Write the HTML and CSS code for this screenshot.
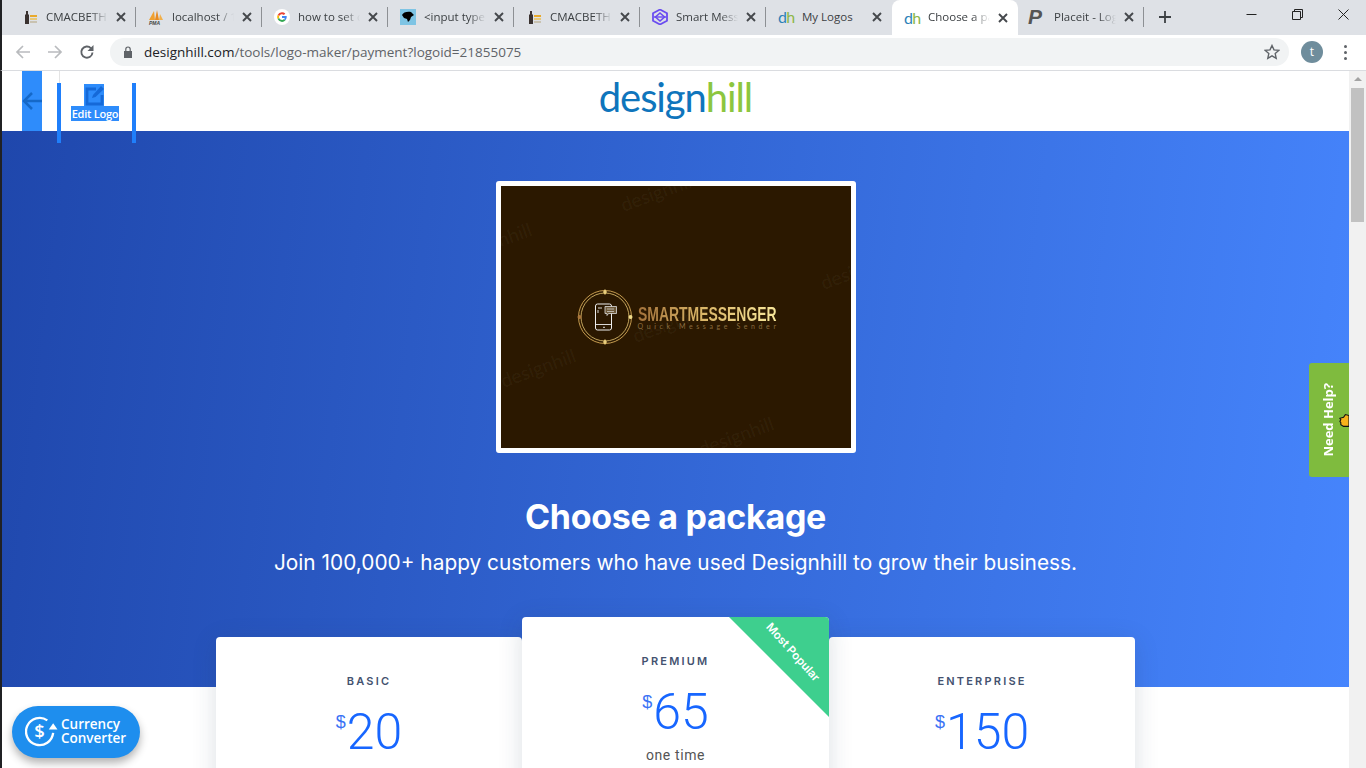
FILE: index.html
```html
<!DOCTYPE html>
<html lang="en">
<head>
<meta charset="utf-8">
<title>Choose a package</title>
<link rel="stylesheet" href="styles.css">
</head>
<body>
<svg class="defs" width="0" height="0"><defs><path id="x" d="M1 1l8 8M9 1l-8 8" stroke="#45484c" stroke-width="1.900" fill="none"/></defs></svg>
<div class="window">
  <div class="tabstrip">
    <div class="tab">
      <svg class="fav" viewBox="0 0 16 16"><path d="M3 15V6l1-1V2h2v3l1 1v9z" fill="#3a3230"/><path d="M8 6h7v2H8z" fill="#e8a92c"/><path d="M8 9h7v2H8z" fill="#e8c878"/><path d="M8 12h7v2H8z" fill="#c9c2b0"/></svg>
      <span class="tab-title">CMACBETH</span><svg class="tab-x" viewBox="0 0 10 10"><use href="#x"/></svg>
    </div>
    <div class="tab">
      <svg class="fav" viewBox="0 0 16 16"><path d="M1 11 6 2l1 9z" fill="#f0a030"/><path d="M7 11 9 1l2 10z" fill="#e88a20"/><path d="M11 11l1-6 3 6z" fill="#f2b04a"/><text x="1" y="15.500" class="fav-pma">PMA</text></svg>
      <span class="tab-title">localhost / 1</span><svg class="tab-x" viewBox="0 0 10 10"><use href="#x"/></svg>
    </div>
    <div class="tab">
      <svg class="fav" viewBox="0 0 16 16"><circle cx="8" cy="8" r="8" fill="#fff"/><path d="M8 3.200a4.800 4.800 0 0 1 3.300 1.300L9.900 5.900A2.900 2.900 0 0 0 5.200 7.100L3.600 5.900A4.800 4.800 0 0 1 8 3.200z" fill="#ea4335"/><path d="M3.600 5.900 5.200 7.100a2.900 2.900 0 0 0 0 1.800L3.600 10.100a4.800 4.800 0 0 1 0-4.200z" fill="#fbbc05"/><path d="M3.600 10.100 5.200 8.900A2.900 2.900 0 0 0 10 10.100l1.500 1.200A4.800 4.800 0 0 1 3.600 10.100z" fill="#34a853"/><path d="M8 7.100h4.700a4.800 4.800 0 0 1-1.200 4.200L10 10.100a2.300 2.300 0 0 0 .8-1.200H8z" fill="#4285f4"/></svg>
      <span class="tab-title">how to set c</span><svg class="tab-x" viewBox="0 0 10 10"><use href="#x"/></svg>
    </div>
    <div class="tab">
      <svg class="fav" viewBox="0 0 16 16"><rect width="16" height="16" fill="#7ec4e4"/><path d="M2 6c1-3 6-4 9-3l3 3-3 2-1 3-2 2-1-3-3-1z" fill="#000"/></svg>
      <span class="tab-title">&lt;input type=</span><svg class="tab-x" viewBox="0 0 10 10"><use href="#x"/></svg>
    </div>
    <div class="tab">
      <svg class="fav" viewBox="0 0 16 16"><path d="M3 15V6l1-1V2h2v3l1 1v9z" fill="#3a3230"/><path d="M8 6h7v2H8z" fill="#e8a92c"/><path d="M8 9h7v2H8z" fill="#e8c878"/><path d="M8 12h7v2H8z" fill="#c9c2b0"/></svg>
      <span class="tab-title">CMACBETH</span><svg class="tab-x" viewBox="0 0 10 10"><use href="#x"/></svg>
    </div>
    <div class="tab">
      <svg class="fav" viewBox="0 0 16 16"><path d="M8 .5 15 4.300v7.400L8 15.500 1 11.700V4.300z" fill="none" stroke="#6a4cf0" stroke-width="1.800"/><path d="M8 4 12.500 8 8 12 3.500 8z" fill="none" stroke="#6a4cf0" stroke-width="1.600"/><path d="M2 8h12" stroke="#6a4cf0" stroke-width="1.400"/></svg>
      <span class="tab-title">Smart Messenger</span><svg class="tab-x" viewBox="0 0 10 10"><use href="#x"/></svg>
    </div>
    <div class="tab">
      <span class="fav fav-dh"><span class="d">d</span><span class="h">h</span></span>
      <span class="tab-title no-fade">My Logos</span><svg class="tab-x" viewBox="0 0 10 10"><use href="#x"/></svg>
    </div>
    <div class="tab active">
      <span class="fav fav-dh"><span class="d">d</span><span class="h">h</span></span>
      <span class="tab-title">Choose a package</span><svg class="tab-x" viewBox="0 0 10 10"><use href="#x"/></svg>
    </div>
    <div class="tab">
      <span class="fav fav-p">P</span>
      <span class="tab-title">Placeit - Logo</span><svg class="tab-x" viewBox="0 0 10 10"><use href="#x"/></svg>
    </div>
    <svg class="newtab" viewBox="0 0 12 12"><path d="M6 0v12M0 6h12" stroke="#3c4043" stroke-width="1.800"/></svg>
    <div class="winbtns">
      <svg viewBox="0 0 11 11" class="winbtn"><path d="M.5 5.500h10" stroke="#222" fill="none"/></svg>
      <svg viewBox="0 0 11 11" class="winbtn"><path d="M.5 2.500h8v8H.5zM2.500 2.500V.5h8v8h-2" stroke="#222" fill="none"/></svg>
      <svg viewBox="0 0 11 11" class="winbtn"><path d="M.5.500l10 10M10.500.500l-10 10" stroke="#222" fill="none"/></svg>
    </div>
  </div>
  <div class="toolbar">
    <svg class="nav" viewBox="0 0 16 16"><path d="M15 8H2M8 2 2 8l6 6" stroke="#b9bbbe" stroke-width="1.700" fill="none"/></svg>
    <svg class="nav" viewBox="0 0 16 16"><path d="M1 8h13M8 2l6 6-6 6" stroke="#b9bbbe" stroke-width="1.700" fill="none"/></svg>
    <svg class="nav reload" viewBox="0 0 16 16"><path d="M13.500 8.500A5.600 5.600 0 1 1 12 4.300" stroke="#5f6368" stroke-width="1.900" fill="none"/><path d="M14.500 1v6h-6z" fill="#5f6368"/></svg>
    <div class="omnibox">
      <svg class="lock" viewBox="0 0 10 12"><path d="M1 5h8v7H1z" fill="#5f6368"/><path d="M2.800 5V3.200a2.200 2.200 0 0 1 4.400 0V5" stroke="#5f6368" stroke-width="1.200" fill="none"/></svg>
      <span class="url"><span class="host">designhill.com</span>/tools/logo-maker/payment?logoid=21855075</span>
      <svg class="star" viewBox="0 0 16 16"><path d="M8 1.500l2 4.400 4.800.5-3.600 3.200 1 4.700L8 11.900l-4.200 2.400 1-4.700L1.200 6.400 6 5.900z" fill="none" stroke="#5f6368" stroke-width="1.400"/></svg>
    </div>
    <span class="avatar">t</span>
    <span class="kebab"><i></i><i></i><i></i></span>
  </div>
  <div class="viewport">
    <div class="edge"></div>
    <main class="page">
      <header class="site-head">
        <div class="head-left">
          <a class="back"><svg viewBox="0 0 20 20"><path d="M20 10H2M10 2 2 10l8 8" stroke="#1568c8" stroke-width="2.500" fill="none"/></svg></a>
          <a class="edit">
            <span class="edit-icon"><svg viewBox="0 0 20 22"><path d="M12 5H3v15h15v-9" stroke="#1569d8" stroke-width="2.800" fill="none"/><path d="M8 14l1-3L17 2l3 3-8.500 8z" fill="#1569d8"/></svg></span>
            <span class="edit-label">Edit Logo</span>
          </a>
        </div>
        <div class="brand"><span class="b-blue">design</span><span class="b-green">hill</span></div>
        <div></div>
      </header>
      <section class="hero">
        <div class="art-frame">
          <div class="art">
            <span class="wm wm1">designhill</span>
            <span class="wm wm2">designhill</span>
            <span class="wm wm3">designhill</span>
            <span class="wm wm4">designhill</span>
            <span class="wm wm5">designhill</span>
            <span class="wm wm6">designhill</span>
            <svg class="emblem" viewBox="0 0 56 56">
              <circle cx="28" cy="28" r="26.500" fill="none" stroke="#c49a4e" stroke-width="1"/>
              <circle cx="28" cy="28" r="24" fill="none" stroke="#e6c572" stroke-width=".8"/>
              <path d="M28 0l2 3-2 3-2-3zM28 50l2 3-2 3-2-3z" fill="#e9cd7c"/>
              <circle cx="2.500" cy="28" r="2" fill="#a8743a"/><circle cx="53.500" cy="28" r="2" fill="#f1dc8a"/>
              <rect x="18.500" y="15" width="16" height="26" rx="2" fill="#2b1800" stroke="#eee" stroke-width="1"/>
              <path d="M18.500 35.500h16M26 38.300h2M21 19h4M21 21v3" stroke="#eee" stroke-width=".9" fill="none"/>
              <path d="M28 17.500h11.500v7h-8l-1.500 2v-2h-2z" fill="#6e5a3a" stroke="#ddd" stroke-width=".8"/>
              <path d="M30 20h7M30 22.500h7" stroke="#ddd" stroke-width=".7"/>
            </svg>
            <div class="art-words">
              <span class="art-name">SMARTMESSENGER</span>
              <span class="art-sub">Quick Message Sender</span>
            </div>
          </div>
        </div>
        <h1>Choose a package</h1>
        <p class="lead">Join 100,000+ happy customers who have used Designhill to grow their business.</p>
      </section>
      <section class="plans">
        <article class="plan side">
          <h2>BASIC</h2>
          <div class="price"><sup>$</sup>20</div>
        </article>
        <article class="plan featured">
          <div class="ribbon"></div>
          <span class="ribbon-text">Most Popular</span>
          <h2>PREMIUM</h2>
          <div class="price"><sup>$</sup>65</div>
          <div class="term">one time</div>
        </article>
        <article class="plan side">
          <h2>ENTERPRISE</h2>
          <div class="price"><sup>$</sup>150</div>
        </article>
      </section>
      <a class="currency">
        <svg viewBox="0 0 34 32"><path d="M23 4A14 14 0 1 0 29 17" stroke="#fff" stroke-width="2.400" fill="none"/><path d="M29 7l4.500 6.500h-9z" fill="#fff"/><text x="15" y="22" class="dollar">$</text></svg>
        <span>Currency<br>Converter</span>
      </a>
      <a class="help"><span>Need Help?</span>
        <svg class="hand" viewBox="0 0 11 15"><path d="M11 2 7 1 5 4 1 5l1 1.500-1 2L2 10l0 2 3 2h6z" fill="#f7b21b" stroke="#111" stroke-width="1.200"/></svg>
      </a>
    </main>
    <aside class="scrollbar">
      <span class="sb-up"></span>
      <span class="sb-thumb"></span>
    </aside>
  </div>
</div>
</body>
</html>
```

FILE: styles.css
```css
* { box-sizing: border-box; }
html, body { margin: 0; height: 100%; overflow: hidden; }
body { font-family: "Open Sans", "Liberation Sans", sans-serif; background: #fff; }
.defs { position: absolute; }
.window { width: 1366px; height: 768px; display: flex; flex-direction: column; overflow: hidden; }

/* tab strip */
.tabstrip { height: 35px; flex: none; background: #dee1e6; display: flex; align-items: stretch; padding-left: 10px; border-left: 2px solid #202124; position: relative; }
.tabstrip .tab:first-child { width: 124px; padding-left: 10px; }
.tab { width: 126px; height: 34px; display: flex; align-items: center; padding-left: 12px; position: relative; font-size: 11.500px; color: #3c4043; flex: none; }
.tab::after { content: ""; position: absolute; right: 0; top: 7px; height: 20px; width: 1px; background: #8d9094; }
.tab.active { background: #fff; border-radius: 8px 8px 0 0; height: 35px; }
.tab.active::after, .tab:nth-child(7)::after { display: none; }
.fav { width: 16px; height: 16px; flex: none; display: block; }
.fav-pma { font: bold 5px "Liberation Sans", sans-serif; fill: #444; font-style: italic; }
.fav-dh { font: 400 16px/15px "Lato", sans-serif; letter-spacing: -.8px; display: flex; }
.fav-dh .d { color: #2d82b8; }
.fav-dh .h { color: #8cb648; }
.fav-p { font: italic 900 21px/16px "Liberation Sans", sans-serif; color: #555; margin-left: -2px; margin-right: 2px; }
.tab-title { margin: -1px 0 0 8px; width: 62px; overflow: hidden; white-space: nowrap; -webkit-mask-image: linear-gradient(90deg, #000 72%, transparent 100%); mask-image: linear-gradient(90deg, #000 72%, transparent 100%); flex: none; line-height: 18px; }
.tab-title.no-fade { -webkit-mask-image: none; mask-image: none; }
.tab-x { width: 10px; height: 10px; margin-left: 8px; flex: none; }
.newtab { width: 12px; height: 12px; margin: 11px 0 0 15px; flex: none; }
.winbtns { margin-left: auto; display: flex; height: 28px; align-items: center; padding-right: 17px; gap: 35px; }
.winbtn { width: 11px; height: 11px; }

/* toolbar */
.toolbar { height: 36px; flex: none; background: #fff; border-bottom: 1px solid #dadce0; border-left: 2px solid #202124; display: flex; align-items: center; padding: 0 0 1px 13px; }
.nav { width: 16px; height: 16px; flex: none; margin-right: 16px; }
.nav.reload { margin-right: 15px; }
.omnibox { width: 1179px; height: 28px; background: #f1f3f4; border-radius: 14px; display: flex; align-items: center; padding: 0 9px 0 13px; }
.lock { width: 10px; height: 12px; flex: none; }
.url { margin-left: 11px; font-size: 13.500px; color: #5f6368; white-space: nowrap; }
.host { color: #202124; }
.star { width: 16px; height: 16px; margin-left: auto; }
.avatar { width: 22px; height: 22px; border-radius: 50%; background: #6f8d9c; color: #fff; font-size: 12px; line-height: 22px; text-align: center; margin-left: 12px; flex: none; }
.kebab { display: flex; flex-direction: column; gap: 3px; margin-left: 21px; }
.kebab i { width: 3px; height: 3px; border-radius: 50%; background: #5f6368; display: block; }

/* viewport */
.viewport { flex: 1; display: flex; min-height: 0; }
.edge { width: 2px; flex: none; background: #202124; }
.page { width: 1347px; flex: none; position: relative; background: #fff; }
.scrollbar { width: 17px; flex: none; background: #f1f1f1; display: flex; flex-direction: column; align-items: center; }
.sb-up { width: 0; height: 0; border: 4px solid transparent; border-top: 0; border-bottom: 4px solid #a3a3a3; margin-top: 6px; }
.sb-thumb { width: 13px; height: 134px; background: #c1c1c1; margin-top: 7px; }

/* site header */
.site-head { height: 60px; display: grid; grid-template-columns: 1fr auto 1fr; position: relative; z-index: 3; background: #fff; }
.head-left { display: flex; align-items: flex-start; padding-left: 20px; }
.back { width: 20px; height: 60px; background: #2e8cfb; display: flex; align-items: center; flex: none; }
.back svg { width: 20px; height: 20px; }
.edit { margin: 12px 0 0 15px; width: 79px; height: 60px; border-left: 4px solid #1f7ffb; border-right: 4px solid #1f7ffb; display: flex; flex-direction: column; align-items: center; padding: 1px 3px 0 0; position: relative; }
.edit::before { content: ""; position: absolute; left: -2px; top: -12px; width: 1px; height: 12px; background: #e4e4e4; }
.edit-icon { width: 20px; height: 22px; background: #2e8cfb; display: block; flex: none; margin-right: 2px; }
.edit-icon svg { width: 20px; height: 22px; display: block; }
.edit-label { background: #2e8cfb; color: #fff; font-size: 11px; line-height: 15px; font-weight: 600; padding: 0 1px; white-space: nowrap; letter-spacing: -.25px; }
.brand { font: 400 40px/56px "Lato", sans-serif; letter-spacing: -1.100px; height: 60px; margin-top: -2px; }
.b-blue { color: #0f75bc; }
.b-green { color: #8cc63f; }

/* hero */
.hero { height: 556px; background: linear-gradient(97deg, #1f47ac 0%, #4685fd 100%); display: flex; flex-direction: column; align-items: center; padding-top: 50px; color: #fff; }
.art-frame { width: 360px; height: 272px; border: 5px solid #fff; border-radius: 3px; flex: none; background: #2b1800; }
.art { width: 100%; height: 100%; position: relative; overflow: hidden; display: flex; align-items: center; justify-content: center; gap: 5px; padding: 0 0 1px 3px; }
.emblem { width: 56px; height: 56px; flex: none; }
.art-words { display: flex; flex-direction: column; width: 140px; padding-top: 3px; align-items: flex-start; }
.art-name { font: 700 20.500px/17px "Liberation Sans", sans-serif; white-space: nowrap; width: max-content; transform: scaleX(.68); transform-origin: left center; background: linear-gradient(90deg, #a2713a, #d9b466 45%, #f8e79a); -webkit-background-clip: text; background-clip: text; color: transparent; }
.art-sub { font: 400 7px/9px "Lato", sans-serif; letter-spacing: 3.600px; white-space: nowrap; color: #8a6b3e; }
.wm { position: absolute; font: 400 19px/24px "Lato", sans-serif; color: rgba(255,255,255,.055); transform: rotate(-20deg); white-space: nowrap; }
.wm1 { left: 118px; top: -6px; }
.wm2 { left: -46px; top: 44px; }
.wm3 { left: 318px; top: 72px; }
.wm4 { left: -2px; top: 170px; }
.wm5 { left: 196px; top: 238px; }
.wm6 { left: 130px; top: 125px; }
h1 { margin: 42px 0 0; font: 700 34px/44px "Inter", sans-serif; color: #fff; letter-spacing: -.3px; }
.lead { margin: 9px 0 0; font: 400 20.850px/30px "Inter", sans-serif; color: #fff; white-space: nowrap; }

/* plans */
.plans { display: flex; justify-content: center; align-items: flex-start; margin-top: -70px; position: relative; z-index: 2; }
.plan { width: 306px; background: #fff; border-radius: 4px; box-shadow: 0 4px 24px rgba(40,60,90,.16); text-align: center; height: 200px; position: relative; }
.plan.side { margin-top: 20px; padding-top: 37px; }
.plan.featured { width: 307px; padding-top: 37px; z-index: 1; overflow: hidden; }
h2 { margin: 0; font: 600 11px/14px "Inter", sans-serif; letter-spacing: 2.200px; color: #44526f; }
.price { font: 300 50px/54px "Roboto", sans-serif; color: #1766ff; margin-top: 17px; }
.price sup { font: 400 18px/1 "Liberation Sans", sans-serif; vertical-align: 21px; margin-right: 1px; color: #3a72f5; }
.term { font: 400 14px/18px "Roboto", sans-serif; color: #555; letter-spacing: .6px; margin-top: 7px; }
.ribbon { position: absolute; right: 0; top: 0; width: 100px; height: 100px; background: #3ecf8e; clip-path: polygon(0 0, 100% 0, 100% 100%); }
.ribbon-text { position: absolute; left: 231px; top: 28px; width: 80px; text-align: center; font: 600 11.500px/14px "Inter", sans-serif; color: #fff; transform: rotate(48deg); white-space: nowrap; }

/* floating */
.currency { position: absolute; left: 10px; top: 635px; width: 128px; height: 52px; background: #1e8eee; border-radius: 26px; box-shadow: 0 5px 8px rgba(0,0,0,.3); display: flex; align-items: center; padding-left: 13px; gap: 3px; color: #fff; font: 600 13.500px/14px "Open Sans", sans-serif; z-index: 5; }
.currency svg { width: 33px; height: 32px; flex: none; }
.currency span { margin-top: -2px; }
.dollar { font: 600 19px "Open Sans", sans-serif; fill: #fff; text-anchor: middle; }
.help { position: absolute; left: 1307px; top: 292px; width: 40px; height: 114px; background: #7fbb3e; border-radius: 3px 0 0 3px; display: flex; align-items: center; justify-content: center; z-index: 5; overflow: hidden; }
.help span { writing-mode: vertical-rl; transform: rotate(180deg); color: #fff; font: 700 13px/14px "Open Sans", sans-serif; white-space: nowrap; margin-right: 2px; }
.hand { position: absolute; right: 0; top: 50px; width: 10px; height: 15px; }
```
